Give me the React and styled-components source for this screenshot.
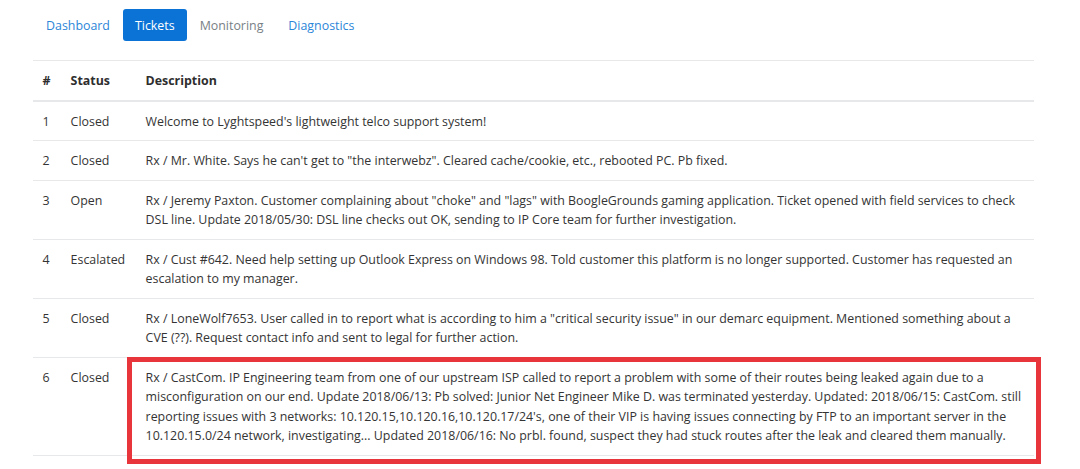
import React from "react";
import styled, { createGlobalStyle } from "styled-components";

const GlobalStyle = createGlobalStyle`
  *, *::before, *::after { box-sizing: border-box; }
  body {
    margin: 0;
    background: #fff;
    color: #343434;
    font-family: "Open Sans", "Noto Sans", sans-serif;
    font-size: 12.4px;
    line-height: 19.4px;
  }
`;

const Page = styled.div`
  position: relative;
  padding: 9px 46px 0 33px;
  min-height: 469px;
  overflow: hidden;
`;

const Nav = styled.ul`
  display: flex;
  gap: 1px;
  list-style: none;
  margin: 0 0 19px 0;
  padding: 0 0 0 1px;
`;

const NavLink = styled.a`
  display: block;
  padding: 6.6px 12px 6.2px;
  border-radius: 3px;
  text-decoration: none;
  cursor: pointer;
  color: ${(p) => (p.$active ? "#fff" : p.$disabled ? "#787f86" : "#2c86d8")};
  background: ${(p) => (p.$active ? "#0c73d6" : "transparent")};
`;

const Table = styled.table`
  width: 100%;
  border-collapse: collapse;
  border-bottom: 1px solid #e6e8ea;
`;

const HeadCell = styled.th`
  text-align: left;
  font-weight: 700;
  color: #2e2e2e;
  padding: 10px 9.6px 9.2px;
  border-top: 1px solid #e6e8ea;
  border-bottom: 2px solid #e6e8ea;
  width: ${(p) => p.$w || "auto"};
  vertical-align: bottom;
`;

const Cell = styled.td`
  position: relative;
  padding: 9.8px 9.6px 9.4px;
  border-top: 1px solid #e6e8ea;
  vertical-align: top;
`;

const HighlightCell = styled(Cell)`
  &::after {
    content: "";
    position: absolute;
    top: -1px;
    left: -9px;
    right: -7px;
    bottom: -9px;
    border: 5.5px solid #e8343b;
    pointer-events: none;
  }
`;

const tickets = [
  { id: 1, status: "Closed", desc: "Welcome to Lyghtspeed's lightweight telco support system!" },
  { id: 2, status: "Closed", desc: 'Rx / Mr. White. Says he can\'t get to "the interwebz". Cleared cache/cookie, etc., rebooted PC. Pb fixed.' },
  { id: 3, status: "Open", desc: 'Rx / Jeremy Paxton. Customer complaining about "choke" and "lags" with BoogleGrounds gaming application. Ticket opened with field services to check DSL line. Update 2018/05/30: DSL line checks out OK, sending to IP Core team for further investigation.' },
  { id: 4, status: "Escalated", desc: "Rx / Cust #642. Need help setting up Outlook Express on Windows 98. Told customer this platform is no longer supported. Customer has requested an escalation to my manager." },
  { id: 5, status: "Closed", desc: 'Rx / LoneWolf7653. User called in to report what is according to him a "critical security issue" in our demarc equipment. Mentioned something about a CVE (??). Request contact info and sent to legal for further action.' },
  { id: 6, status: "Closed", highlight: true, desc: "Rx / CastCom. IP Engineering team from one of our upstream ISP called to report a problem with some of their routes being leaked again due to a misconfiguration on our end. Update 2018/06/13: Pb solved: Junior Net Engineer Mike D. was terminated yesterday. Updated: 2018/06/15: CastCom. still reporting issues with 3 networks: 10.120.15,10.120.16,10.120.17/24's, one of their VIP is having issues connecting by FTP to an important server in the 10.120.15.0/24 network, investigating... Updated 2018/06/16: No prbl. found, suspect they had stuck routes after the leak and cleared them manually." },
];

const tabs = [
  { label: "Dashboard" },
  { label: "Tickets", active: true },
  { label: "Monitoring", disabled: true },
  { label: "Diagnostics" },
];

export default function App() {
  return (
    <Page>
      <GlobalStyle />
      <Nav>
        {tabs.map((t) => (
          <li key={t.label}>
            <NavLink $active={t.active} $disabled={t.disabled}>{t.label}</NavLink>
          </li>
        ))}
      </Nav>
      <Table>
        <thead>
          <tr>
            <HeadCell $w="28px">#</HeadCell>
            <HeadCell $w="75px">Status</HeadCell>
            <HeadCell>Description</HeadCell>
          </tr>
        </thead>
        <tbody>
          {tickets.map((t) => {
            const Desc = t.highlight ? HighlightCell : Cell;
            return (
              <tr key={t.id}>
                <Cell>{t.id}</Cell>
                <Cell>{t.status}</Cell>
                <Desc>{t.desc}</Desc>
              </tr>
            );
          })}
        </tbody>
      </Table>
    </Page>
  );
}
